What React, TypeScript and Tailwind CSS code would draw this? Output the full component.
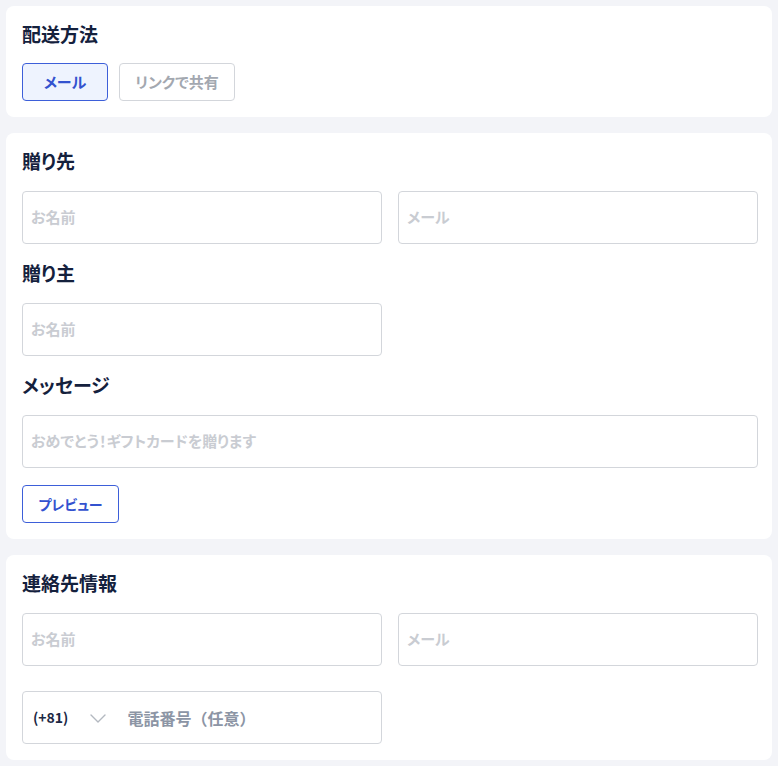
const font = "font-['Noto_Sans_CJK_JP','Noto_Sans',sans-serif] [font-feature-settings:'palt']"

function Title({ children }: { children: React.ReactNode }) {
  return <h3 className="text-[19px] leading-6 font-bold text-[#14213d]">{children}</h3>
}

function Field({ placeholder, className = '' }: { placeholder: string; className?: string }) {
  return (
    <div
      className={`h-[53px] flex items-center px-2 rounded border border-[#d3d6db] bg-white text-[15px] font-bold text-[#c9ccd2] ${className}`}
    >
      {placeholder}
    </div>
  )
}

export default function App() {
  return (
    <div className={`min-h-[766px] bg-[#f3f4f8] px-1.5 py-1.5 flex flex-col gap-4 ${font}`}>
      {/* Delivery method */}
      <section className="bg-white rounded-lg pl-4 pr-3.5 pt-4 pb-4">
        <Title>配送方法</Title>
        <div className="flex gap-[11px] mt-[17px]">
          <button className="h-[38px] w-[86px] rounded border border-[#3d5fd9] bg-[#eef3fe] text-[15px] font-bold text-[#3352cf]">
            メール
          </button>
          <button className="h-[38px] w-[116px] rounded border border-[#d3d6db] bg-white text-[15px] font-bold text-[#a3a8b0]">
            リンクで共有
          </button>
        </div>
      </section>

      {/* Recipient / sender / message */}
      <section className="bg-white rounded-lg pl-4 pr-3.5 pt-4 pb-4">
        <Title>贈り先</Title>
        <div className="grid grid-cols-2 gap-4 mt-[18px]">
          <Field placeholder="お名前" />
          <Field placeholder="メール" />
        </div>

        <div className="mt-[17px]">
          <Title>贈り主</Title>
        </div>
        <div className="grid grid-cols-2 gap-4 mt-[18px]">
          <Field placeholder="お名前" />
        </div>

        <div className="mt-[17px]">
          <Title>メッセージ</Title>
        </div>
        <Field placeholder="おめでとう！ギフトカードを贈ります" className="mt-[18px]" />

        <button className="mt-[17px] h-[38px] w-[97px] rounded border border-[#3d5fd9] bg-white text-[14px] font-bold text-[#3352cf]">
          プレビュー
        </button>
      </section>

      {/* Contact info */}
      <section className="bg-white rounded-lg pl-4 pr-3.5 pt-4 pb-4">
        <Title>連絡先情報</Title>
        <div className="grid grid-cols-2 gap-4 mt-[18px]">
          <Field placeholder="お名前" />
          <Field placeholder="メール" />
        </div>
        <div className="grid grid-cols-2 gap-4 mt-[25px]">
          <div className="h-[53px] flex items-center pl-[10px] rounded border border-[#d3d6db] bg-white">
            <span className="text-[14px] font-bold text-[#1c2844]">(+81)</span>
            <svg width="16" height="9" viewBox="0 0 16 9" fill="none" className="ml-[22px] mt-[2px]">
              <path d="M1 1l7 7 7-7" stroke="#b3b8c0" strokeWidth="1.4" strokeLinecap="round" strokeLinejoin="round" />
            </svg>
            <span className="ml-[21px] text-[16px] font-bold text-[#8c95a5] [font-feature-settings:normal]">
              電話番号（任意）
            </span>
          </div>
        </div>
      </section>
    </div>
  )
}
